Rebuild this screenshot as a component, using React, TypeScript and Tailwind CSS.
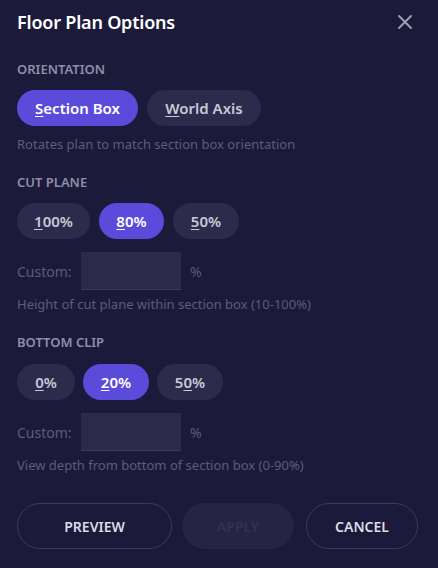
import { useState } from "react";

type Opt = { label: string; key: number };

function Chip({
  label,
  ul,
  active,
  onClick,
  className,
}: {
  label: string;
  ul: number;
  active: boolean;
  onClick: () => void;
  className?: string;
}) {
  return (
    <button
      type="button"
      onClick={onClick}
      className={
        "h-9 rounded-full text-[15px] font-semibold " +
        (active ? "bg-[#5b4bdb] text-white" : "bg-[#2d2b4b] text-[#c9c8d8]") +
        " " +
        (className ?? "")
      }
    >
      {label.slice(0, ul)}
      <span className="underline underline-offset-2">{label[ul]}</span>
      {label.slice(ul + 1)}
    </button>
  );
}

function Custom() {
  return (
    <div className="mt-[13px] flex items-center text-[14px] text-[#5d5c7a]">
      <span className="w-[64px]">Custom:</span>
      <input
        className="h-[38px] w-[100px] border-b border-[#3b3960] bg-[#2c2a48] px-2 text-white outline-none"
        aria-label="custom"
      />
      <span className="ml-[9px]">%</span>
    </div>
  );
}

export default function App() {
  const [orient, setOrient] = useState(0);
  const [cut, setCut] = useState(1);
  const [clip, setClip] = useState(1);

  const cutOpts: (Opt & { ul: number; w: string })[] = [
    { label: "100%", key: 0, ul: 0, w: "w-[73px]" },
    { label: "80%", key: 1, ul: 0, w: "w-[65px]" },
    { label: "50%", key: 2, ul: 0, w: "w-[66px]" },
  ];
  const clipOpts: (Opt & { ul: number; w: string })[] = [
    { label: "0%", key: 0, ul: 0, w: "w-[58px]" },
    { label: "20%", key: 1, ul: 0, w: "w-[66px]" },
    { label: "50%", key: 2, ul: 1, w: "w-[66px]" },
  ];

  return (
    <div
      className="h-[568px] w-[438px] bg-[#1b1a3b] px-[17px] pt-[11px] text-white"
      style={{ fontFamily: '"Noto Sans", "Open Sans", sans-serif' }}
    >
      <div className="flex items-center justify-between">
        <h1 className="text-[18px] font-semibold leading-[22px] tracking-[-0.2px]">
          Floor Plan Options
        </h1>
        <button type="button" className="mr-[9px] text-[#a3a2b6]" aria-label="close">
          <svg width="14" height="14" viewBox="0 0 14 14" stroke="currentColor" strokeWidth="1.8" strokeLinecap="round">
            <path d="M1 1 L13 13 M13 1 L1 13" />
          </svg>
        </button>
      </div>

      <div className="mt-[28px] text-[13px] font-semibold leading-4 text-[#8f8ea6]">ORIENTATION</div>
      <div className="mt-[13px] flex gap-[9px]">
        <Chip label="Section Box" ul={0} active={orient === 0} onClick={() => setOrient(0)} className="w-[121px]" />
        <Chip label="World Axis" ul={0} active={orient === 1} onClick={() => setOrient(1)} className="w-[114px]" />
      </div>
      <p className="mt-[10px] text-[13px] leading-4 text-[#5d5c7a]">Rotates plan to match section box orientation</p>

      <div className="mt-[22px] text-[13px] font-semibold leading-4 text-[#8f8ea6]">CUT PLANE</div>
      <div className="mt-[13px] flex gap-[9px]">
        {cutOpts.map((o) => (
          <Chip key={o.key} label={o.label} ul={o.ul} active={cut === o.key} onClick={() => setCut(o.key)} className={o.w} />
        ))}
      </div>
      <Custom />
      <p className="mt-[6px] text-[13px] leading-4 text-[#5d5c7a]">Height of cut plane within section box (10-100%)</p>

      <div className="mt-[22px] text-[13px] font-semibold leading-4 text-[#8f8ea6]">BOTTOM CLIP</div>
      <div className="mt-[14px] flex gap-[8px]">
        {clipOpts.map((o) => (
          <Chip key={o.key} label={o.label} ul={o.ul} active={clip === o.key} onClick={() => setClip(o.key)} className={o.w} />
        ))}
      </div>
      <Custom />
      <p className="mt-[6px] text-[13px] leading-4 text-[#5d5c7a]">View depth from bottom of section box (0-90%)</p>

      <div className="mt-[30px] flex gap-[10px]">
        <button type="button" className="h-[46px] w-[155px] rounded-full border border-[#3b3a62] text-[14px] font-semibold text-[#dcdbe6]">
          PREVIEW
        </button>
        <button type="button" disabled className="h-[46px] w-[112px] rounded-full bg-[#252444] text-[14px] font-semibold text-[#33324f]">
          APPLY
        </button>
        <button type="button" className="ml-[2px] h-[46px] w-[112px] rounded-full border border-[#3b3a62] text-[14px] font-semibold text-[#dcdbe6]">
          CANCEL
        </button>
      </div>
    </div>
  );
}
